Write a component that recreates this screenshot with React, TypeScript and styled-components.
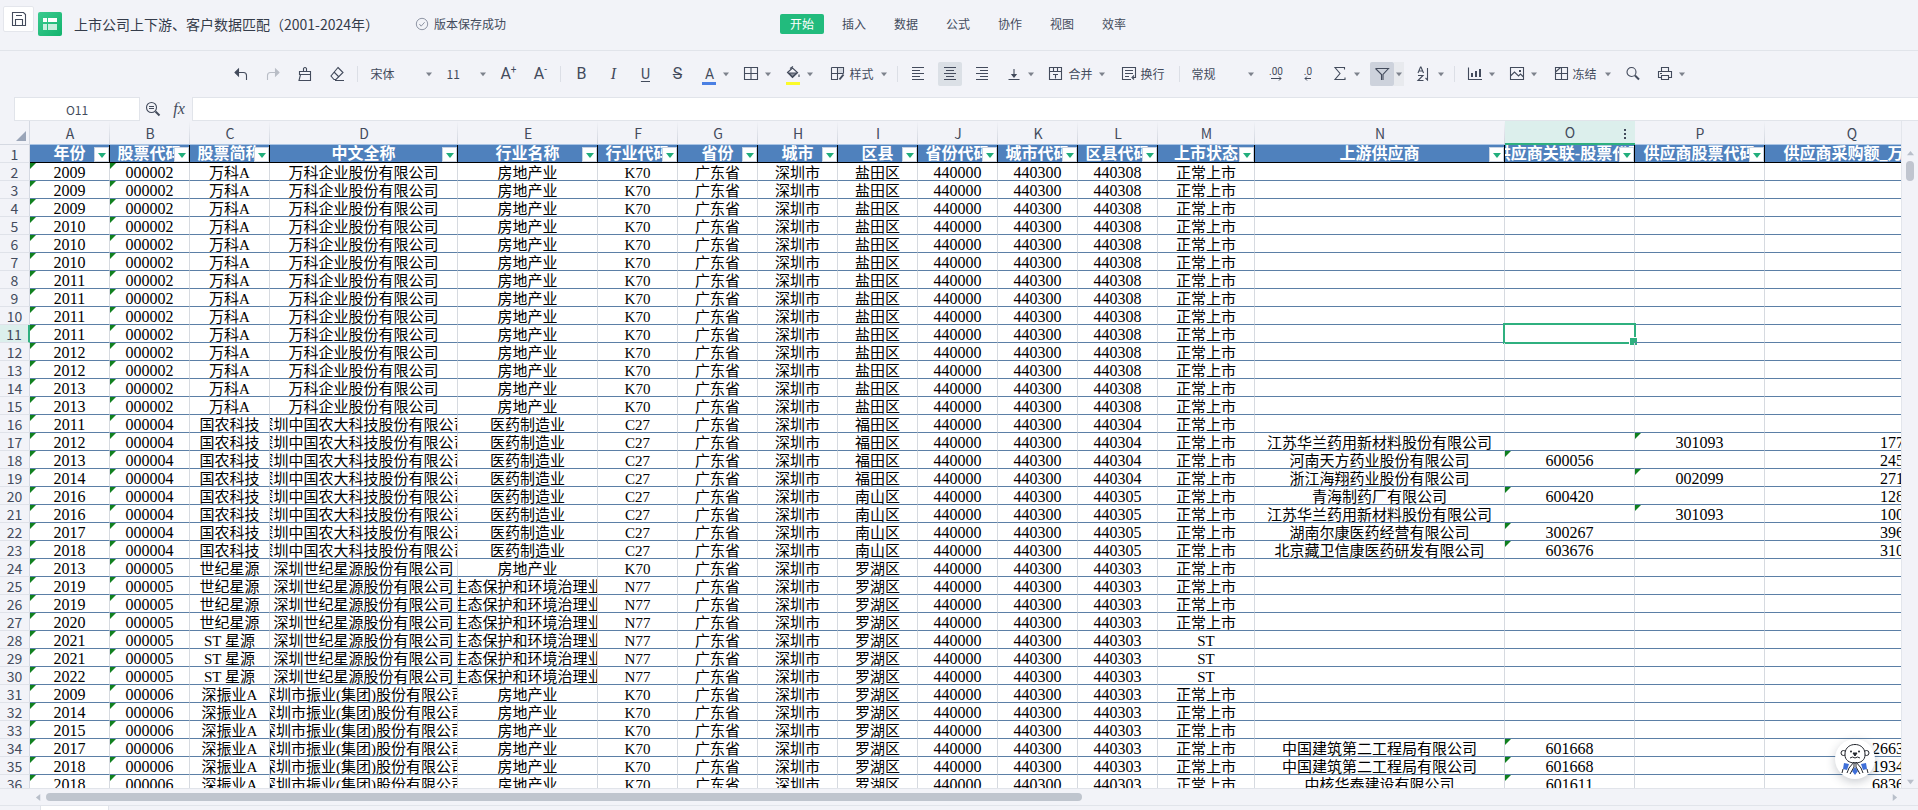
import React from "react";
import styled, { createGlobalStyle, css } from "styled-components";

const ui = '"Noto Sans CJK SC", "Noto Sans", sans-serif';
const cellFont = '"Liberation Serif", "Noto Sans CJK SC", serif';
const ink = "#434b5c";
const green = "#2fb07f";
const line = "#e1e4ea";

const GlobalStyle = createGlobalStyle`
  * { box-sizing: border-box; }
  body { margin: 0; background: #f2f3f8; color: ${ink}; font: 12px/20px ${ui}; overflow: hidden; }
  button, input, select { font: inherit; color: inherit; margin: 0; padding: 0; border: 0; background: none; border-radius: 0; outline: 0; }
  svg { display: block; flex: none; }
`;

/* ---------- page ---------- */

const Page = styled.div`
  display: flex;
  flex-direction: column;
  height: 100vh;
`;

const TitleBar = styled.header`
  display: grid;
  grid-template-columns: 1fr auto 1fr;
  height: 51px;
  flex: none;
  padding-right: 2px;
  border-bottom: 1px solid ${line};
`;

const TitleLeft = styled.div`
  display: flex;
  align-items: flex-start;
  padding: 6px 0 0 3px;
  white-space: nowrap;
`;

const SaveButton = styled.button`
  display: flex;
  align-items: center;
  justify-content: center;
  width: 31px;
  height: 26px;
  background: #fff;
  border: 1px solid #e4e6ec;
  border-radius: 2px;
`;

const Logo = styled.span`
  margin: 6px 12px 0 4px;
`;

const DocName = styled.h1`
  margin: 6px 36px 0 0;
  font-size: 14px;
  line-height: 24px;
  font-weight: 400;
  color: #353c4a;
`;

const SaveState = styled.span`
  display: flex;
  align-items: center;
  gap: 5px;
  height: 24px;
  margin-top: 6px;
  svg { color: #8b92a1; }
`;

const Menu = styled.nav`
  display: flex;
  gap: 8px;
  padding-top: 14px;
`;

const MenuItem = styled.button<{ $active?: boolean }>`
  width: 44px;
  height: 20px;
  border-radius: 2px;
  line-height: 20px;
  ${(p) => p.$active && css`background: #22bb7d; color: #fff;`}
`;

/* ---------- toolbar ---------- */

const Toolbar = styled.div`
  display: flex;
  align-items: center;
  justify-content: center;
  gap: 8px;
  height: 46px;
  flex: none;
  padding-right: 2px;
`;

const Divider = styled.span`
  width: 1px;
  height: 16px;
  background: #dcdfe6;
`;

const Split = styled.div`
  display: flex;
`;

const Tool = styled.button<{ $bg?: string }>`
  display: flex;
  align-items: center;
  justify-content: center;
  gap: 4px;
  width: 24px;
  height: 24px;
  border-radius: 2px;
  white-space: nowrap;
  background: ${(p) => p.$bg ?? "none"};
`;

const LabelTool = styled(Tool)<{ $compact?: boolean }>`
  width: auto;
  padding: 0 ${(p) => (p.$compact ? 4 : 6)}px;
`;

const CaretButton = styled.button<{ $bg?: string }>`
  display: flex;
  align-items: center;
  justify-content: center;
  width: 10px;
  height: 24px;
  background: ${(p) => p.$bg ?? "none"};
`;

const Picker = styled.label<{ $w: number }>`
  display: grid;
  grid-template-columns: 1fr 10px;
  align-items: center;
  width: ${(p) => p.$w}px;
  height: 24px;
`;

const PickerSelect = styled.select`
  appearance: none;
  grid-area: 1 / 1 / 2 / 3;
  height: 24px;
  padding-left: 4px;
`;

const PickerCaret = styled.span`
  grid-area: 1 / 2 / 2 / 3;
  display: flex;
  justify-content: center;
  pointer-events: none;
`;

const Letter = styled.span<{ $kind?: "italic" | "underline" | "strike" }>`
  font-family: Roboto, sans-serif;
  font-size: 16px;
  line-height: 20px;
  ${(p) => p.$kind === "italic" && css`font-family: "Liberation Serif", serif; font-style: italic;`}
  ${(p) => p.$kind === "underline" && css`font-size: 14px; text-decoration: underline; text-underline-offset: 2px; text-decoration-thickness: 1px;`}
  ${(p) => p.$kind === "strike" && css`text-decoration: line-through; text-decoration-thickness: 1px;`}
  sup { font-size: 10px; line-height: 8px; vertical-align: 6px; }
`;

const Swatch = styled.span<{ $color: string }>`
  display: flex;
  flex-direction: column;
  align-items: center;
  justify-content: flex-end;
  height: 22px;
  font: 14px/16px Roboto, sans-serif;
  &::after { content: ""; width: 14px; height: 3px; background: ${(p) => p.$color}; }
`;

/* ---------- formula bar ---------- */

const FormulaBar = styled.div`
  display: flex;
  align-items: center;
  height: 24px;
  flex: none;
  padding-left: 14px;
`;

const NameBox = styled.input`
  width: 126px;
  height: 24px;
  text-align: center;
  background: #fff;
  border: 1px solid ${line};
`;

const BarButton = styled.button`
  display: flex;
  align-items: center;
  justify-content: center;
  width: 26px;
  height: 24px;
  font: italic 16px/20px "Liberation Serif", serif;
`;

const FormulaInput = styled.input`
  flex: 1;
  height: 24px;
  background: #fff;
  border: 1px solid ${line};
  border-right: 0;
`;

/* ---------- sheet ---------- */

const Workspace = styled.main`
  display: flex;
  flex: 1;
  min-height: 0;
`;

const GridArea = styled.div`
  flex: 1;
  min-width: 0;
  overflow: hidden;
  background: #fff;
`;

const Grid = styled.table`
  table-layout: fixed;
  width: 0;
  border-collapse: separate;
  border-spacing: 0;
  th, td { padding: 0; position: relative; }
`;

const Corner = styled.td`
  height: 24px;
  background: #f2f3f8;
  border-right: 1px solid #d5d9e2;
  border-bottom: 1px solid #d5d9e2;
  &::after {
    content: "";
    position: absolute;
    right: 3px;
    bottom: 3px;
    border: 5px solid transparent;
    border-right-color: #9aa5b8;
    border-bottom-color: #9aa5b8;
  }
`;

const ColumnHead = styled.th<{ $active?: boolean }>`
  height: 24px;
  font-weight: 400;
  font-size: 14px;
  line-height: 22px;
  background: ${(p) => (p.$active ? "#dcefec" : "linear-gradient(#f2f3f8, #cfd4dd) right / 1px 100% no-repeat, #f2f3f8")};
  border-bottom: ${(p) => (p.$active ? `2px solid ${green}` : "1px solid #a9c4e4")};
`;

const ColumnMenu = styled.button`
  position: absolute;
  right: 6px;
  top: 6px;
  width: 8px;
  height: 14px;
`;

const RowHead = styled.th<{ $active?: boolean }>`
  height: 18px;
  font-weight: 400;
  font-size: 14px;
  line-height: 16px;
  background: ${(p) => (p.$active ? "#dcefec" : "#f2f3f8")};
  border-right: ${(p) => (p.$active ? `2px solid ${green}` : "1px solid #d5d9e2")};
  border-bottom: 1px solid #dfe2e9;
`;

const FieldHead = styled.th`
  height: 18px;
  background: #4f81bd;
  color: #fff;
  border-right: 1px solid #000;
  border-bottom: 1px solid #000;
  font: bold 16px/18px ${cellFont};
`;

const Cell = styled.td<{ $code?: boolean }>`
  height: 18px;
  color: #000;
  border-right: 1px solid #d6dae0;
  border-bottom: 1px solid #5b7fa6;
  font: ${(p) => (p.$code ? 16 : 15)}px/20px ${cellFont};
`;

const Clip = styled.div<{ $end?: boolean }>`
  display: flex;
  justify-content: ${(p) => (p.$end ? "flex-end" : "center")};
  height: 17px;
  padding-right: ${(p) => (p.$end ? 34 : 0)}px;
  overflow: hidden;
  white-space: pre;
`;

const TextFlag = styled.span`
  position: absolute;
  left: 0;
  top: 0;
  border-top: 6px solid #10801f;
  border-right: 6px solid transparent;
`;

const FilterButton = styled.button`
  position: absolute;
  right: 0;
  bottom: 0;
  display: flex;
  align-items: center;
  justify-content: center;
  width: 15px;
  height: 15px;
  background: #fff;
  border: 1px solid #c9d4e2;
`;

const Selection = styled.span`
  position: absolute;
  inset: -2px;
  border: 2px solid ${green};
  &::after {
    content: "";
    position: absolute;
    right: -4px;
    bottom: -4px;
    width: 7px;
    height: 7px;
    background: ${green};
    border: 1px solid #fff;
  }
`;

const VScroll = styled.div`
  display: flex;
  flex-direction: column;
  align-items: center;
  width: 17px;
  padding: 28px 0 3px;
  border-left: 1px solid #e3e6ec;
`;

const VThumb = styled.span`
  width: 8px;
  height: 20px;
  margin: 4px 0 auto;
  border-radius: 4px;
  background: #c0c5cf;
`;

const HScroll = styled.div`
  display: flex;
  align-items: center;
  height: 17px;
  flex: none;
  padding: 0 20px 0 35px;
  border-top: 1px solid ${line};
`;

const HTrack = styled.div`
  flex: 1;
  padding: 0 4px;
`;

const HThumb = styled.div`
  width: 56.3%;
  height: 8px;
  border-radius: 4px;
  background: #bfc5ce;
`;

const ScrollButton = styled.button`
  display: flex;
  align-items: center;
  justify-content: center;
  width: 7px;
  height: 8px;
`;

const SheetTabs = styled.footer`
  height: 5px;
  flex: none;
  padding-left: 40px;
  border-top: 1px solid ${line};
`;

const SheetTab = styled.div`
  width: 69px;
  height: 5px;
  background: #fff;
  border: solid ${line};
  border-width: 0 1px;
`;

const Assistant = styled.button`
  position: fixed;
  right: 43px;
  bottom: 31px;
  display: flex;
  align-items: center;
  justify-content: center;
  width: 40px;
  height: 40px;
  border-radius: 50%;
  background: #fff;
  box-shadow: 0 3px 10px rgba(40, 50, 70, 0.25);
`;

/* ---------- icons ---------- */

const paths: Record<string, React.ReactNode> = {
  save: <><path d="M1.5 1.5h11l2 2v11h-13z" /><path d="M4.5 14.5v-6h7v6M5 4.5h6" /></>,
  undo: <><path d="M3 6.5h7.500q3 0 3 3v4.500" /><path d="M5.500 3v7L2 6.500z" fill="currentColor" /></>,
  redo: <><path d="M13 6.500H5.500q-3 0-3 3v4.500" /><path d="M10.500 3v7L14 6.500z" fill="currentColor" /></>,
  brush: <><path d="M2.500 5.500h11v3h-11zM3.500 8.500L2 14.500h11.500v-6" /><path d="M6.500 5.500v-3q1.500-2 3 0v3" /></>,
  eraser: <><path d="M9 1.500l5 5-7 7H5L2 10z" /><path d="M5 6l5 5M6 14.500h9" /></>,
  borders: <path d="M1.500 1.500h13v12h-13zM8 1.500v12M1.500 7.500h13" />,
  bucket: <><path d="M2.500 6.500L7.500 2l5 4.500-5 5z" /><path d="M4 7h8l-4.500 4z" fill="currentColor" fillOpacity=".6" /><path d="M5 2.500l3-2M14 8.500v2.500" /></>,
  style: <><path d="M2.500 1.500h12v6M8.500 1.500v12h-6v-12M2.500 7.500h12" /><path d="M9 2h5v5H9z" fill="#d5d9e1" stroke="none" /><path d="M14.500 8.500l-4 5" strokeWidth="2" /></>,
  left: <path d="M2 1.500h12M2 4.500h8M2 7.500h12M2 10.500h8M2 13.500h12" />,
  center: <path d="M2 1.500h12M4 4.500h8M2 7.500h12M4 10.500h8M2 13.500h12" />,
  right: <path d="M2 1.500h12M6 4.500h8M2 7.500h12M6 10.500h8M2 13.500h12" />,
  bottom: <><path d="M8 3v7M2.500 13.500h11" /><path d="M6 8.500h4L8 11z" fill="currentColor" /></>,
  merge: <path d="M1.500 1.500h12v12h-12zM1.500 5.500h12M5.500 1.500v4M9.500 1.500v4M5 8.500h5M7.500 8.500v4" />,
  wrap: <><path d="M10 13.500H1.500v-12h13v10h-3" /><path d="M4 4.500h8M4 7.500h8M4 10.500h4M13 9.500l-2 2 2 2" /></>,
  sigma: <path d="M12.500 3.500v-2h-9.500l5 6-5 6h10v-2" />,
  filter: <path d="M1.500 2.500h13L9 8.500v5.500M1.500 2.500L7.500 8.500V14" />,
  sort: <><path d="M2 7l2.500-6h.5L7.500 7M3 5h4M2 9.500h5l-5 5h5.500" /><path d="M11.500 2v12l-2-2" /></>,
  chart: <><path d="M1.500 1.500v12H15" /><path d="M5 11V7M9 11V5M13 11V3" strokeWidth="2" /></>,
  image: <><path d="M1.500 1.500h13v12h-13zM1.500 10l4-4 4 4 2-2 3 3" /><path d="M10 4h2v2h-2z" fill="currentColor" stroke="none" /></>,
  freeze: <path d="M2.500 1.500h12v12h-12zM8.500 1.500v12M2.500 7.500h12M2.500 6l5-4.500" />,
  search: <><circle cx="6.500" cy="6" r="4.500" /><path d="M10 9.500l4 4" strokeWidth="2" /></>,
  print: <path d="M4.500 5.500v-4h7v4M4 11.500H1.500v-6h13v6H12M4.500 9.500h7v4h-7zM3 7.500h2" />,
  find: <><circle cx="6.500" cy="6.500" r="5" /><path d="M4 5.500h5M4 7.500h5" /><path d="M10.500 10.500l4 4" strokeWidth="2" /></>,
  check: <><circle cx="8" cy="8" r="6.500" /><path d="M5 8l2 2.500 4-4.500" /></>,
};

const Icon = ({ name, size = 16 }: { name: string; size?: number }) => (
  <svg width={size} height={size} viewBox="0 0 16 16" fill="none" stroke="currentColor" strokeWidth="1.1" aria-hidden="true">
    {paths[name]}
  </svg>
);

const Arrow = ({ dir = "down", color = "#7d828c", w = 6 }: { dir?: string; color?: string; w?: number }) => {
  const d: Record<string, string> = { down: "M0 2h8L4 7z", up: "M0 6h8L4 1z", left: "M6 0v8L1 4z", right: "M2 0v8l5-4z" };
  return <svg width={w} height={w} viewBox="0 0 8 8" aria-hidden="true"><path d={d[dir]} fill={color} /></svg>;
};

const DecimalIcon = ({ digits, more }: { digits: string; more?: boolean }) => (
  <svg width="16" height="16" viewBox="0 0 16 16" aria-hidden="true">
    <text x="8" y="9" textAnchor="middle" fontFamily="Roboto, sans-serif" fontSize="10" fill={ink}>{digits}</text>
    <path d={more ? "M3 12.500h10M11 10.500l2 2-2 2" : "M5 12.500h6M7 10.500l-2 2 2 2"} fill="none" stroke={ink} />
  </svg>
);

const LogoMark = () => (
  <svg width="24" height="24" viewBox="0 0 24 24" aria-hidden="true">
    <defs><linearGradient id="lg" x1="0" y1="0" x2="1" y2="1"><stop offset="0" stopColor="#3ccb90" /><stop offset="1" stopColor="#12b36d" /></linearGradient></defs>
    <rect width="24" height="24" rx="2" fill="url(#lg)" />
    <path d="M5 6h4v4H5zM10 6h9v4h-9z" fill="#fff" />
    <path d="M5 12h4v6H5zM10 12h9v6h-9z" fill="#fff" fillOpacity=".75" />
  </svg>
);

const Bear = () => (
  <svg width="32" height="34" viewBox="0 0 32 34" fill="none" stroke="#23262d" aria-hidden="true">
    <path d="M5 21l5 1-2 6-4-1zM27 21l-5 1 2 6 4-1zM16 25l-3 4 3 4 3-4z" fill="#3f6fd8" stroke="none" />
    <circle cx="4.500" cy="11" r="2.500" fill="#fff" /><circle cx="27.500" cy="11" r="2.500" fill="#fff" />
    <path d="M6 13C5 -1 27 -1 26 13c0 5-4 8-10 8S6 18 6 13z" fill="#fff" />
    <circle cx="12" cy="9.500" r="1" fill="#23262d" stroke="none" /><circle cx="20" cy="9.500" r="1" fill="#23262d" stroke="none" />
    <path d="M14 11h4l-2 3z" fill="#23262d" />
    <path d="M11 16q2.500-2 5 0q2.500-2 5 0" />
    <path d="M8 31l2-5 5-6v5l-4 7M24 31l-2-5-5-6v5l4 7M4 27l-1 4M28 27l1 4" fill="#fff" />
  </svg>
);

/* ---------- data ---------- */

const columns: [string, number, string][] = [
  ["A", 80, "年份"], ["B", 80, "股票代码"], ["C", 80, "股票简称"], ["D", 188, "中文全称"],
  ["E", 140, "行业名称"], ["F", 80, "行业代码"], ["G", 80, "省份"], ["H", 80, "城市"],
  ["I", 80, "区县"], ["J", 80, "省份代码"], ["K", 80, "城市代码"], ["L", 80, "区县代码"],
  ["M", 97, "上市状态"], ["N", 250, "上游供应商"], ["O", 130, "供应商关联-股票代码"],
  ["P", 130, "供应商股票代码"], ["Q", 174, "供应商采购额_万元"],
];

type Company = { code: string; name: string; full: string; industry: string; ind: string; area: string; areaCode: string; status?: string };
type Supply = [string, string, string, string];

const vanke: Company = { code: "000002", name: "万科A", full: "万科企业股份有限公司", industry: "房地产业", ind: "K70", area: "盐田区", areaCode: "440308" };
const guonong: Company = { code: "000004", name: "国农科技", full: "深圳中国农大科技股份有限公司", industry: "医药制造业", ind: "C27", area: "福田区", areaCode: "440304" };
const guonongNs: Company = { ...guonong, area: "南山区", areaCode: "440305" };
const xingyuan: Company = { code: "000005", name: "世纪星源", full: "深圳世纪星源股份有限公司", industry: "房地产业", ind: "K70", area: "罗湖区", areaCode: "440303" };
const xingyuanEco: Company = { ...xingyuan, industry: "生态保护和环境治理业", ind: "N77" };
const xingyuanSt: Company = { ...xingyuanEco, name: "ST 星源", status: "ST" };
const zhenye: Company = { code: "000006", name: "深振业A", full: "深圳市振业(集团)股份有限公司", industry: "房地产业", ind: "K70", area: "罗湖区", areaCode: "440303" };

const records: [number, Company, Supply?][] = [
  ...[2009, 2009, 2009, 2010, 2010, 2010, 2011, 2011, 2011, 2011, 2012, 2012, 2013, 2013].map((y): [number, Company] => [y, vanke]),
  [2011, guonong],
  [2012, guonong, ["江苏华兰药用新材料股份有限公司", "", "301093", "177"]],
  [2013, guonong, ["河南天方药业股份有限公司", "600056", "", "245"]],
  [2014, guonong, ["浙江海翔药业股份有限公司", "", "002099", "271"]],
  [2016, guonongNs, ["青海制药厂有限公司", "600420", "", "128"]],
  [2016, guonongNs, ["江苏华兰药用新材料股份有限公司", "", "301093", "100"]],
  [2017, guonongNs, ["湖南尔康医药经营有限公司", "300267", "", "396"]],
  [2018, guonongNs, ["北京藏卫信康医药研发有限公司", "603676", "", "310"]],
  [2013, xingyuan],
  [2019, xingyuanEco],
  [2019, xingyuanEco],
  [2020, xingyuanEco],
  [2021, xingyuanSt],
  [2021, xingyuanSt],
  [2022, xingyuanSt],
  [2009, zhenye],
  [2014, zhenye],
  [2015, zhenye],
  [2017, zhenye, ["中国建筑第二工程局有限公司", "601668", "", "2663"]],
  [2018, zhenye, ["中国建筑第二工程局有限公司", "601668", "", "1934"]],
  [2018, zhenye, ["中核华泰建设有限公司", "601611", "", "6836"]],
];

const flagged = ["A", "B", "O", "P"];
const numeric = ["A", "B", "J", "K", "L", "O", "P", "Q"];

const toCells = ([year, c, s]: [number, Company, Supply?]) => [
  String(year), c.code, c.name, c.full, c.industry, c.ind, "广东省", "深圳市", c.area,
  "440000", "440300", c.areaCode, c.status ?? "正常上市", ...(s ?? ["", "", "", ""]),
];

/* ---------- composed controls ---------- */

const SplitTool = ({ label, children, bg, caretBg }: { label: string; children: React.ReactNode; bg?: string; caretBg?: string }) => (
  <Split>
    <Tool aria-label={label} $bg={bg}>{children}</Tool>
    <CaretButton aria-label={`${label}选项`} $bg={caretBg}><Arrow /></CaretButton>
  </Split>
);

const SplitLabel = ({ icon, text, compact }: { icon: string; text: string; compact?: boolean }) => (
  <Split>
    <LabelTool $compact={compact}><Icon name={icon} />{text}</LabelTool>
    <CaretButton aria-label={`${text}选项`}><Arrow /></CaretButton>
  </Split>
);

const SelectBox = ({ label, value, width }: { label: string; value: string; width: number }) => (
  <Picker $w={width}>
    <PickerSelect aria-label={label} defaultValue={value}><option>{value}</option></PickerSelect>
    <PickerCaret><Arrow /></PickerCaret>
  </Picker>
);

export default function App() {
  return (
    <Page>
      <GlobalStyle />
      <TitleBar>
        <TitleLeft>
          <SaveButton aria-label="保存"><Icon name="save" /></SaveButton>
          <Logo><LogoMark /></Logo>
          <DocName>上市公司上下游、客户数据匹配（2001-2024年）</DocName>
          <SaveState><Icon name="check" size={14} />版本保存成功</SaveState>
        </TitleLeft>
        <Menu>
          {["开始", "插入", "数据", "公式", "协作", "视图", "效率"].map((m, i) => (
            <MenuItem key={m} $active={i === 0}>{m}</MenuItem>
          ))}
        </Menu>
      </TitleBar>

      <Toolbar>
        <Tool aria-label="撤销"><Icon name="undo" /></Tool>
        <Tool aria-label="恢复" disabled style={{ color: "#b9bdc6" }}><Icon name="redo" /></Tool>
        <Tool aria-label="格式刷"><Icon name="brush" /></Tool>
        <Tool aria-label="清除"><Icon name="eraser" /></Tool>
        <Divider />
        <SelectBox label="字体" value="宋体" width={68} />
        <SelectBox label="字号" value="11" width={46} />
        <Tool aria-label="增大字号"><Letter>A<sup>+</sup></Letter></Tool>
        <Tool aria-label="减小字号"><Letter>A<sup>-</sup></Letter></Tool>
        <Divider />
        <Tool aria-label="加粗"><Letter>B</Letter></Tool>
        <Tool aria-label="斜体"><Letter $kind="italic">I</Letter></Tool>
        <Tool aria-label="下划线"><Letter $kind="underline">U</Letter></Tool>
        <Tool aria-label="删除线"><Letter $kind="strike">S</Letter></Tool>
        <SplitTool label="字体颜色"><Swatch $color="#4a7fe3">A</Swatch></SplitTool>
        <SplitTool label="边框"><Icon name="borders" /></SplitTool>
        <SplitTool label="填充颜色"><Swatch $color="#fbfb2a"><Icon name="bucket" /></Swatch></SplitTool>
        <SplitLabel icon="style" text="样式" />
        <Divider />
        <Tool aria-label="左对齐"><Icon name="left" /></Tool>
        <Tool aria-label="居中" $bg="#dbe0e6"><Icon name="center" /></Tool>
        <Tool aria-label="右对齐"><Icon name="right" /></Tool>
        <SplitTool label="垂直对齐"><Icon name="bottom" /></SplitTool>
        <SplitLabel icon="merge" text="合并" compact />
        <LabelTool><Icon name="wrap" />换行</LabelTool>
        <Divider />
        <SelectBox label="数字格式" value="常规" width={68} />
        <Tool aria-label="增加小数位"><DecimalIcon digits=".00" more /></Tool>
        <Tool aria-label="减少小数位"><DecimalIcon digits=".0" /></Tool>
        <SplitTool label="求和"><Icon name="sigma" /></SplitTool>
        <SplitTool label="筛选" bg="#cdd2dc" caretBg="#e8eaee"><Icon name="filter" /></SplitTool>
        <SplitTool label="排序"><Icon name="sort" /></SplitTool>
        <Divider />
        <SplitTool label="图表"><Icon name="chart" /></SplitTool>
        <SplitTool label="图片"><Icon name="image" /></SplitTool>
        <SplitLabel icon="freeze" text="冻结" />
        <Tool aria-label="查找"><Icon name="search" /></Tool>
        <SplitTool label="打印"><Icon name="print" /></SplitTool>
      </Toolbar>

      <FormulaBar>
        <NameBox aria-label="名称框" defaultValue="O11" />
        <BarButton aria-label="查看公式"><Icon name="find" /></BarButton>
        <BarButton>fx</BarButton>
        <FormulaInput aria-label="编辑栏" />
      </FormulaBar>

      <Workspace>
        <GridArea>
          <Grid>
            <colgroup>
              <col width={30} />
              {columns.map(([id, w]) => <col key={id} width={w} />)}
            </colgroup>
            <thead>
              <tr>
                <Corner />
                {columns.map(([id]) => (
                  <ColumnHead key={id} scope="col" $active={id === "O"}>
                    {id}
                    {id === "O" && (
                      <ColumnMenu aria-label="列菜单">
                        <svg width="8" height="14" viewBox="0 0 8 14"><path d="M3 2h2v2H3zM3 6h2v2H3zM3 10h2v2H3z" fill={ink} /></svg>
                      </ColumnMenu>
                    )}
                  </ColumnHead>
                ))}
              </tr>
              <tr>
                <RowHead scope="row">1</RowHead>
                {columns.map(([id, , title]) => (
                  <FieldHead key={id}>
                    <Clip>{title}</Clip>
                    <FilterButton aria-label={`筛选${title}`}><Arrow color="#21ae7b" w={8} /></FilterButton>
                  </FieldHead>
                ))}
              </tr>
            </thead>
            <tbody>
              {records.map((rec, i) => {
                const row = i + 2;
                return (
                  <tr key={row}>
                    <RowHead scope="row" $active={row === 11}>{row}</RowHead>
                    {toCells(rec).map((text, c) => {
                      const id = columns[c][0];
                      return (
                        <Cell key={id} $code={numeric.includes(id)}>
                          <Clip $end={id === "Q"}>{text}</Clip>
                          {text && flagged.includes(id) && <TextFlag />}
                          {row === 11 && id === "O" && <Selection />}
                        </Cell>
                      );
                    })}
                  </tr>
                );
              })}
            </tbody>
          </Grid>
        </GridArea>
        <VScroll>
          <ScrollButton aria-label="向上滚动"><Arrow dir="up" color="#b9bfca" w={7} /></ScrollButton>
          <VThumb />
          <ScrollButton aria-label="向下滚动"><Arrow dir="down" color="#b9bfca" w={7} /></ScrollButton>
        </VScroll>
      </Workspace>

      <HScroll>
        <ScrollButton aria-label="向左滚动"><Arrow dir="left" color="#b9bfca" w={7} /></ScrollButton>
        <HTrack><HThumb /></HTrack>
        <ScrollButton aria-label="向右滚动"><Arrow dir="right" color="#b9bfca" w={7} /></ScrollButton>
      </HScroll>
      <SheetTabs><SheetTab /></SheetTabs>
      <Assistant aria-label="智能助手"><Bear /></Assistant>
    </Page>
  );
}
